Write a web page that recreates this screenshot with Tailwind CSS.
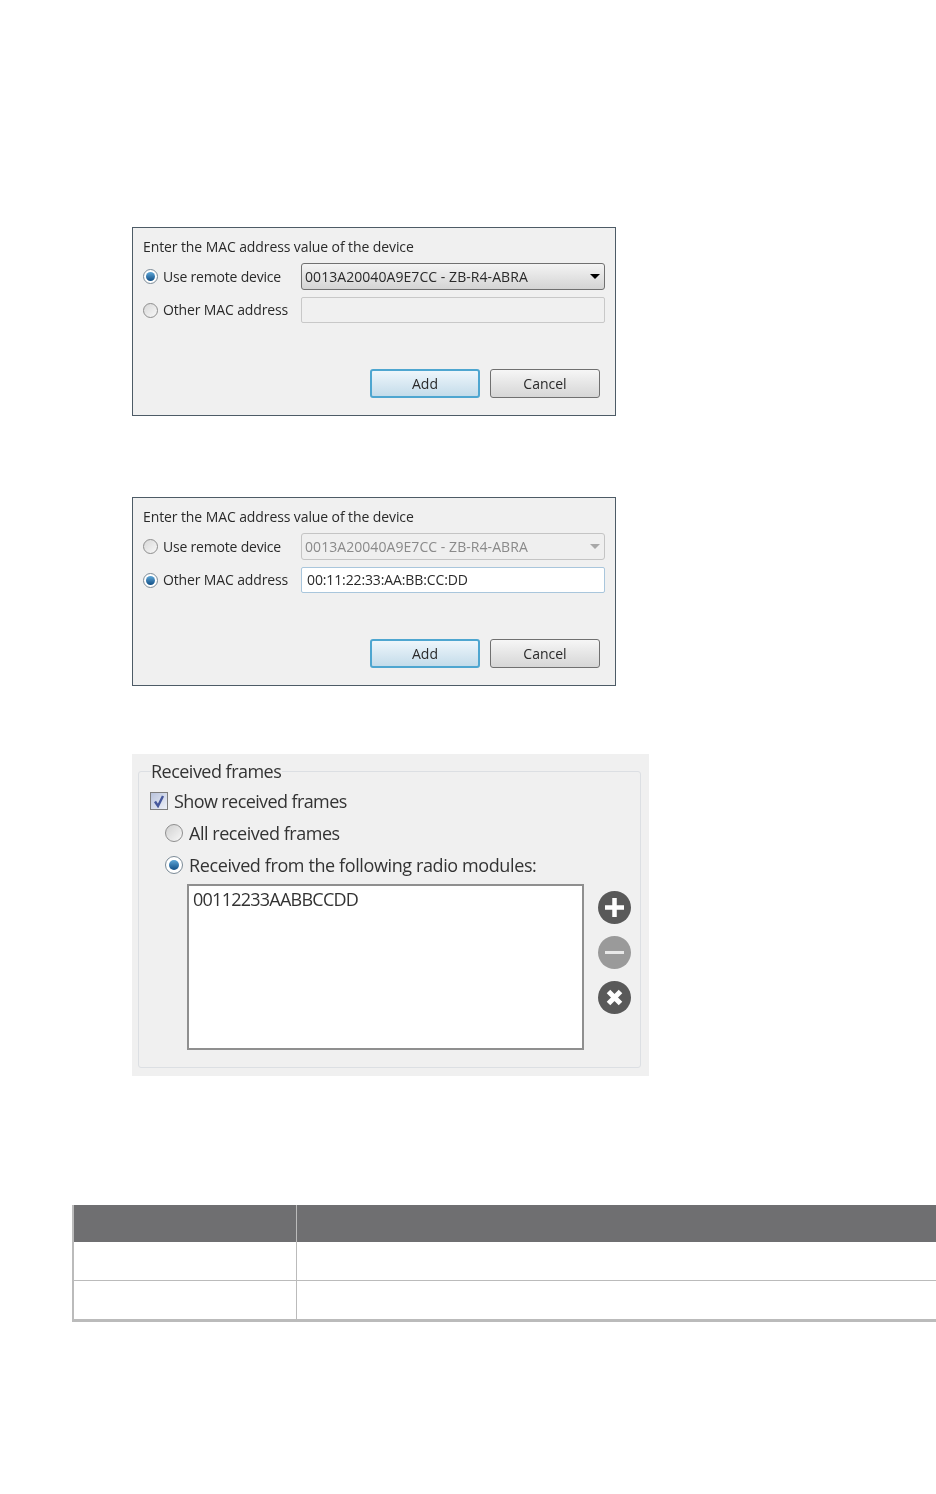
<!DOCTYPE html>
<html lang="en">
<head>
    <meta charset="UTF-8">
    <title>MAC address dialogs</title>
    <script src="https://cdn.jsdelivr.net/npm/@tailwindcss/browser@4"></script>
</head>
<body class="bg-white font-['Open_Sans',sans-serif]">
    <div class="w-[936px] h-[1494px] overflow-hidden">

        <!-- first dialog: remote device selected -->
        <div class="ml-[132px] mt-[227px] w-[484px] h-[189px] border border-[#4d5b66] bg-[#f0f0f0] px-[10px] pt-[9px] text-[14px] text-[#2a2a2a] blur-[0.3px]">
            <p class="h-5 leading-5 tracking-[-0.1px]">Enter the MAC address value of the device</p>
            <div class="mt-[6px] flex items-center h-[27px]">
                <span class="w-[15px] h-[15px] rounded-full border border-[#7b8a96] bg-white flex items-center justify-center"><span class="w-[9px] h-[9px] rounded-full bg-gradient-to-b from-[#5fa8d8] to-[#0f4f86]"></span></span>
                <span class="ml-[5px] w-[138px] tracking-[-0.2px]">Use remote device</span>
                <div class="w-[304px] h-[27px] border border-[#707070] rounded-[3px] bg-gradient-to-b from-[#f4f4f4] to-[#d4d4d4] flex items-center pl-[3px] pr-[4px] justify-between">
                    <span class="tracking-[0.06px]">0013A20040A9E7CC - ZB-R4-ABRA</span>
                    <span class="w-0 h-0 border-l-[5px] border-r-[5px] border-t-[5px] border-l-transparent border-r-transparent border-t-black"></span>
                </div>
            </div>
            <div class="mt-[7px] flex items-center h-[26px]">
                <span class="w-[15px] h-[15px] rounded-full border border-[#8e8e8e] bg-gradient-to-br from-[#d8d8d8] to-[#f8f8f8]"></span>
                <span class="ml-[5px] w-[138px] tracking-[-0.14px] -translate-y-px">Other MAC address</span>
                <div class="w-[304px] h-[26px] border border-[#c8c8c8] rounded-[2px] bg-[#f0f0f0]"></div>
            </div>
            <div class="mt-[46px] ml-[227px] flex gap-[10px]">
                <button class="w-[110px] h-[29px] border-2 border-[#4ea6d0] rounded-[3px] bg-gradient-to-b from-[#eef6fb] to-[#c4dcea] text-[#2a2a2a]">Add</button>
                <button class="w-[110px] h-[29px] border border-[#707070] rounded-[3px] bg-gradient-to-b from-[#f6f6f6] to-[#d6d6d6] text-[#2a2a2a]">Cancel</button>
            </div>
        </div>

        <!-- second dialog: other MAC address selected -->
        <div class="ml-[132px] mt-[81px] w-[484px] h-[189px] border border-[#4d5b66] bg-[#f0f0f0] px-[10px] pt-[9px] text-[14px] text-[#2a2a2a] blur-[0.3px]">
            <p class="h-5 leading-5 tracking-[-0.1px]">Enter the MAC address value of the device</p>
            <div class="mt-[6px] flex items-center h-[27px]">
                <span class="w-[15px] h-[15px] rounded-full border border-[#8e8e8e] bg-gradient-to-br from-[#d8d8d8] to-[#f8f8f8]"></span>
                <span class="ml-[5px] w-[138px] tracking-[-0.2px]">Use remote device</span>
                <div class="w-[304px] h-[27px] border border-[#c4c4c4] rounded-[3px] bg-[#efefef] flex items-center pl-[3px] pr-[4px] justify-between">
                    <span class="tracking-[0.06px] text-[#8a8a8a]">0013A20040A9E7CC - ZB-R4-ABRA</span>
                    <span class="w-0 h-0 border-l-[5px] border-r-[5px] border-t-[5px] border-l-transparent border-r-transparent border-t-[#a8a8a8]"></span>
                </div>
            </div>
            <div class="mt-[7px] flex items-center h-[26px]">
                <span class="w-[15px] h-[15px] rounded-full border border-[#7b8a96] bg-white flex items-center justify-center"><span class="w-[9px] h-[9px] rounded-full bg-gradient-to-b from-[#5fa8d8] to-[#0f4f86]"></span></span>
                <span class="ml-[5px] w-[138px] tracking-[-0.14px] -translate-y-px">Other MAC address</span>
                <div class="w-[304px] h-[26px] border border-[#a9c6dc] rounded-[2px] bg-white flex items-center pl-[5px] tracking-[-0.12px]"><span class="-translate-y-px">00:11:22:33:AA:BB:CC:DD</span></div>
            </div>
            <div class="mt-[46px] ml-[227px] flex gap-[10px]">
                <button class="w-[110px] h-[29px] border-2 border-[#4ea6d0] rounded-[3px] bg-gradient-to-b from-[#eef6fb] to-[#c4dcea] text-[#2a2a2a]">Add</button>
                <button class="w-[110px] h-[29px] border border-[#707070] rounded-[3px] bg-gradient-to-b from-[#f6f6f6] to-[#d6d6d6] text-[#2a2a2a]">Cancel</button>
            </div>
        </div>

        <!-- received frames panel -->
        <div class="ml-[132px] mt-[68px] w-[517px] h-[322px] bg-[#f0f0f0] pl-[6px] pr-2 pt-[17px] pb-2 text-[18px] text-[#333] blur-[0.3px]">
            <div class="relative h-[297px] border border-[#dcdfe3] rounded-[3px] pl-[11px] pt-[19px]">
                <span class="absolute left-[12px] -top-[13px] h-6 leading-6 bg-[#f0f0f0] tracking-[-0.52px] pr-[1px]">Received frames</span>
                <div class="flex items-center h-[20px]">
                    <span class="w-[18px] h-[18px] border border-[#7e7e7e] bg-gradient-to-br from-[#b9c3dc] to-[#eef1f8] flex items-center justify-center">
                        <svg width="12" height="14" viewBox="0 0 12 14" fill="none"><path d="M2 7.5 L5 12 L10 2" stroke="#46589c" stroke-width="2.4"/></svg>
                    </span>
                    <span class="ml-[6px] tracking-[-0.6px]">Show received frames</span>
                </div>
                <div class="mt-[12px] ml-[15px] flex items-center h-[20px]">
                    <span class="w-[18px] h-[18px] rounded-full border border-[#8e8e8e] bg-gradient-to-br from-[#d0d0d0] to-[#f8f8f8]"></span>
                    <span class="ml-[6px] tracking-[-0.46px]">All received frames</span>
                </div>
                <div class="mt-[12px] ml-[15px] flex items-center h-[20px]">
                    <span class="w-[18px] h-[18px] rounded-full border border-[#7b8a96] bg-white flex items-center justify-center"><span class="w-[10px] h-[10px] rounded-full bg-gradient-to-b from-[#5fa8d8] to-[#0f4f86]"></span></span>
                    <span class="ml-[6px] tracking-[-0.39px]">Received from the following radio modules:</span>
                </div>
                <div class="mt-[9px] ml-[37px] flex">
                    <div class="w-[397px] h-[166px] border-2 border-[#8f8f8f] bg-white pl-[4px] leading-[26px] tracking-[-0.75px]">00112233AABBCCDD</div>
                    <div class="ml-[14px] mt-[7px] flex flex-col gap-[12px]">
                        <svg width="33" height="33" viewBox="0 0 33 33"><circle cx="16.5" cy="16.5" r="16.5" fill="#595959"/><path d="M16.5 7v19M7 16.5h19" stroke="#fff" stroke-width="4.5"/></svg>
                        <svg width="33" height="33" viewBox="0 0 33 33"><circle cx="16.5" cy="16.5" r="16.5" fill="#9a9a9a"/><path d="M7 16.5h19" stroke="#e8e8e8" stroke-width="3"/></svg>
                        <svg width="33" height="33" viewBox="0 0 33 33"><circle cx="16.5" cy="16.5" r="16.5" fill="#595959"/><path d="M10.5 10.5l12 12M22.5 10.5l-12 12" stroke="#fff" stroke-width="5"/></svg>
                    </div>
                </div>
            </div>
        </div>

        <!-- empty table -->
        <div class="ml-[72px] mt-[129px] w-[864px] border-l-2 border-b-[3px] border-[#bbbbbb]">
            <div class="flex h-[37px] bg-[#6f6f71]">
                <div class="w-[223px] border-r border-[#bbbbbb]"></div>
                <div class="flex-1"></div>
            </div>
            <div class="flex h-[39px] border-b border-[#bbbbbb]">
                <div class="w-[223px] border-r border-[#bbbbbb]"></div>
                <div class="flex-1"></div>
            </div>
            <div class="flex h-[38px]">
                <div class="w-[223px] border-r border-[#bbbbbb]"></div>
                <div class="flex-1"></div>
            </div>
        </div>
    </div>
</body>
</html>
